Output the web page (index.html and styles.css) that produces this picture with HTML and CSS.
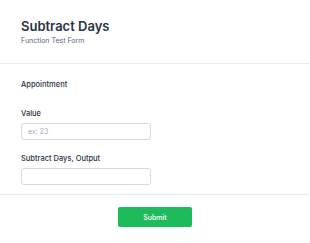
FILE: index.html
```html
<!DOCTYPE html>
<html lang="en">
<head>
    <meta charset="UTF-8">
    <meta name="viewport" content="width=device-width, initial-scale=1.0">
    <title>Subtract Days</title>
    <link rel="stylesheet" href="styles.css">
</head>
<body>
    <form class="form">
        <div class="header">
            <h1 class="title">Subtract Days</h1>
            <div class="subtitle">Function Test Form</div>
        </div>

        <div class="fields">
            <div class="section-label">Appointment</div>

            <div class="field">
                <label for="value">Value</label>
                <input type="text" id="value" placeholder="ex: 23">
            </div>

            <div class="field">
                <label for="output">Subtract Days, Output</label>
                <input type="text" id="output">
            </div>
        </div>

        <div class="actions">
            <button type="button">Submit</button>
        </div>
    </form>
</body>
</html>
```

FILE: styles.css
```css
* {
    margin: 0;
    padding: 0;
    box-sizing: border-box;
    font-family: Inter, "Noto Sans", sans-serif;
}

body {
    background-color: #ffffff;
    color: #2c3345;
}

.header {
    padding: 17px 21px 18px;
    border-bottom: 1px solid #eaebf2;
}

.title {
    font-size: 13px;
    font-weight: 600;
    color: #2c3345;
    line-height: 18px;
}

.subtitle {
    font-size: 7px;
    line-height: 9px;
    color: #5b6682;
    margin-top: 1px;
}

.fields {
    padding: 16px 21px 9px;
    border-bottom: 1px solid #eaebf2;
}

.section-label {
    font-size: 7.5px;
    line-height: 10px;
    font-weight: 500;
    color: #2c3345;
    margin-bottom: 19px;
}

.field {
    margin-bottom: 14px;
}

.field:last-child {
    margin-bottom: 0;
}

.field label {
    display: block;
    font-size: 7.5px;
    line-height: 10px;
    font-weight: 500;
    color: #2c3345;
    margin-bottom: 4px;
}

input {
    display: block;
    width: 130px;
    height: 17px;
    border: 1px solid #d3d8e2;
    border-radius: 3px;
    padding: 0 6px;
    font-size: 7px;
    color: #2c3345;
}

input::placeholder {
    color: #a3abba;
}

.actions {
    display: flex;
    justify-content: center;
    padding-top: 12px;
}

button {
    width: 74px;
    height: 20px;
    background-color: #1dbb5b;
    border: none;
    border-radius: 2px;
    color: #ffffff;
    font-size: 7px;
    font-weight: 500;
}
```
